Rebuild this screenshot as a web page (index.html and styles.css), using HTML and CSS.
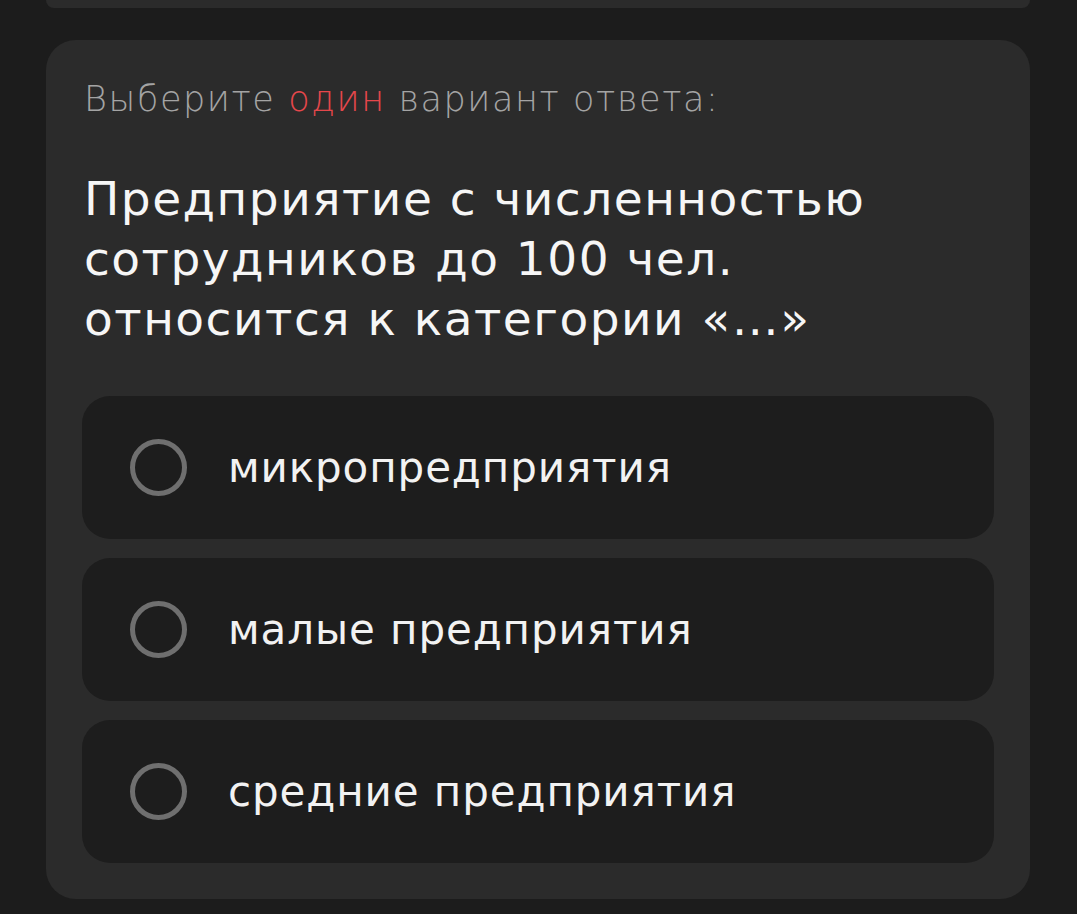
FILE: index.html
```html
<!DOCTYPE html>
<html lang="ru">
<head>
  <meta charset="UTF-8">
  <title>Тест</title>
  <link rel="stylesheet" href="styles.css">
</head>
<body>

  <div class="card card-prev"></div>

  <div class="card">
    <p class="hint">Выберите <span class="accent">один</span> вариант ответа:</p>
    <h2 class="question">Предприятие с численностью сотрудников до 100 чел. относится к категории «…»</h2>

    <div class="options">
      <label class="option">
        <span class="radio"></span>
        <span class="option-text">микропредприятия</span>
      </label>
      <label class="option">
        <span class="radio"></span>
        <span class="option-text">малые предприятия</span>
      </label>
      <label class="option">
        <span class="radio"></span>
        <span class="option-text">средние предприятия</span>
      </label>
    </div>
  </div>

</body>
</html>
```

FILE: styles.css
```css
body {
  font-family: 'DejaVu Sans', 'Noto Sans', sans-serif;
  margin: 0;
  padding: 0 47px 0 46px;
  background-color: #1c1c1c;
  color: #f2f2f2;
  overflow: hidden;
}

.card {
  background-color: #2b2b2b;
  border-radius: 30px;
  padding: 34px 36px 36px 36px;
  margin-bottom: 32px;
}

.card-prev {
  height: 8px;
  padding: 0;
  border-radius: 0 0 30px 30px;
}

.hint {
  margin: 0;
  padding-left: 2px;
  font-size: 35px;
  font-weight: 200;
  letter-spacing: 1.6px;
  color: #a4a4a4;
  line-height: 50px;
}

.accent {
  color: #e5474b;
}

.question {
  margin: 45px 0 47px;
  padding-left: 2px;
  font-size: 47px;
  font-weight: 400;
  letter-spacing: 1.5px;
  line-height: 60px;
  color: #f6f6f6;
}

.options {
  display: flex;
  flex-direction: column;
  gap: 19px;
}

.option {
  display: flex;
  align-items: center;
  gap: 41px;
  height: 143px;
  padding: 0 48px;
  background-color: #1d1d1d;
  border-radius: 28px;
  cursor: pointer;
}

.radio {
  width: 47px;
  height: 47px;
  border: 5px solid #6f6f6f;
  border-radius: 50%;
  flex-shrink: 0;
}

.option-text {
  font-size: 42px;
  letter-spacing: 0.9px;
  color: #f2f2f2;
}
```
